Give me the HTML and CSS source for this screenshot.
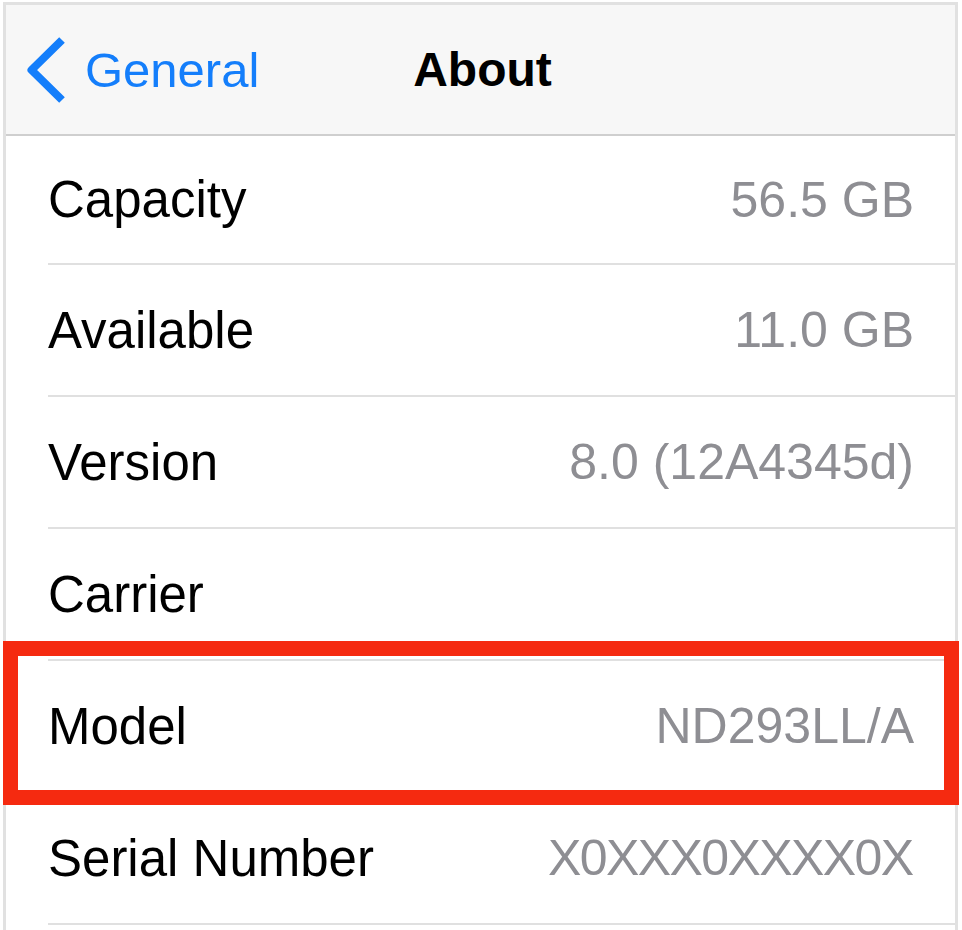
FILE: index.html
```html
<!DOCTYPE html>
<html lang="en">
<head>
<meta charset="utf-8">
<title>About</title>
<link rel="stylesheet" href="styles.css">
</head>
<body>
<div class="frame">
  <header class="nav">
    <div class="back">
      <svg class="chev" width="46" height="70" viewBox="0 0 46 70" aria-hidden="true">
        <path d="M38 5 L7.5 35 L38 65" fill="none" stroke="#147efb" stroke-width="8" stroke-linejoin="round"/>
      </svg>
      <span class="back-label">General</span>
    </div>
    <h1 class="title">About</h1>
    <div class="spacer"></div>
  </header>
  <ul class="list">
    <li class="row first"><div class="cell"><span class="label">Capacity</span><span class="value">56.5 GB</span></div></li>
    <li class="row"><div class="cell"><span class="label">Available</span><span class="value">11.0 GB</span></div></li>
    <li class="row"><div class="cell"><span class="label">Version</span><span class="value">8.0 (12A4345d)</span></div></li>
    <li class="row"><div class="cell"><span class="label">Carrier</span><span class="value"></span></div></li>
    <li class="row highlighted"><div class="cell"><span class="label">Model</span><span class="value">ND293LL/A</span></div><div class="mark"></div></li>
    <li class="row"><div class="cell"><span class="label">Serial Number</span><span class="value tight">X0XXX0XXXX0X</span></div></li>
  </ul>
</div>
</body>
</html>
```
FILE: styles.css
```css
* { box-sizing: border-box; }
html, body { margin: 0; padding: 0; background: #fff; }
body {
  font-family: "Liberation Sans", Arial, Helvetica, sans-serif;
  width: 962px;
  height: 930px;
  overflow: hidden;
  padding: 2px 4px 0 3px;
}
.frame {
  border: 3px solid #e1e1e1;
  border-bottom: none;
  height: 928px;
  background: #fff;
}
.nav {
  height: 131px;
  background: #f7f7f7;
  border-bottom: 2px solid #cfcfcf;
  display: grid;
  grid-template-columns: 1fr auto 1fr;
  align-items: center;
}
.back {
  display: flex;
  align-items: center;
  padding-left: 18px;
}
.chev { display: block; margin-right: 15px; }
.back-label {
  color: #147efb;
  font-size: 49px;
}
.title {
  margin: 0;
  padding-left: 4px;
  font-size: 48px;
  font-weight: bold;
  color: #000;
}
.list {
  list-style: none;
  margin: 0;
  padding: 0;
}
.row {
  position: relative;
  height: 132px;
  padding-left: 42px;
}
.row.first { height: 129px; }
.cell {
  height: 100%;
  display: flex;
  align-items: center;
  justify-content: space-between;
  padding-right: 41px;
  border-bottom: 2px solid #e0e0e0;
}
.label {
  font-size: 51px;
  color: #000;
}
.value {
  font-size: 50px;
  color: #8e8e93;
}
.value.tight { letter-spacing: -1.6px; margin-right: 1.6px; }
.mark {
  position: absolute;
  left: -3px;
  top: -20px;
  width: 956px;
  height: 164px;
  border: 15px solid #f52a10;
  pointer-events: none;
}
```
